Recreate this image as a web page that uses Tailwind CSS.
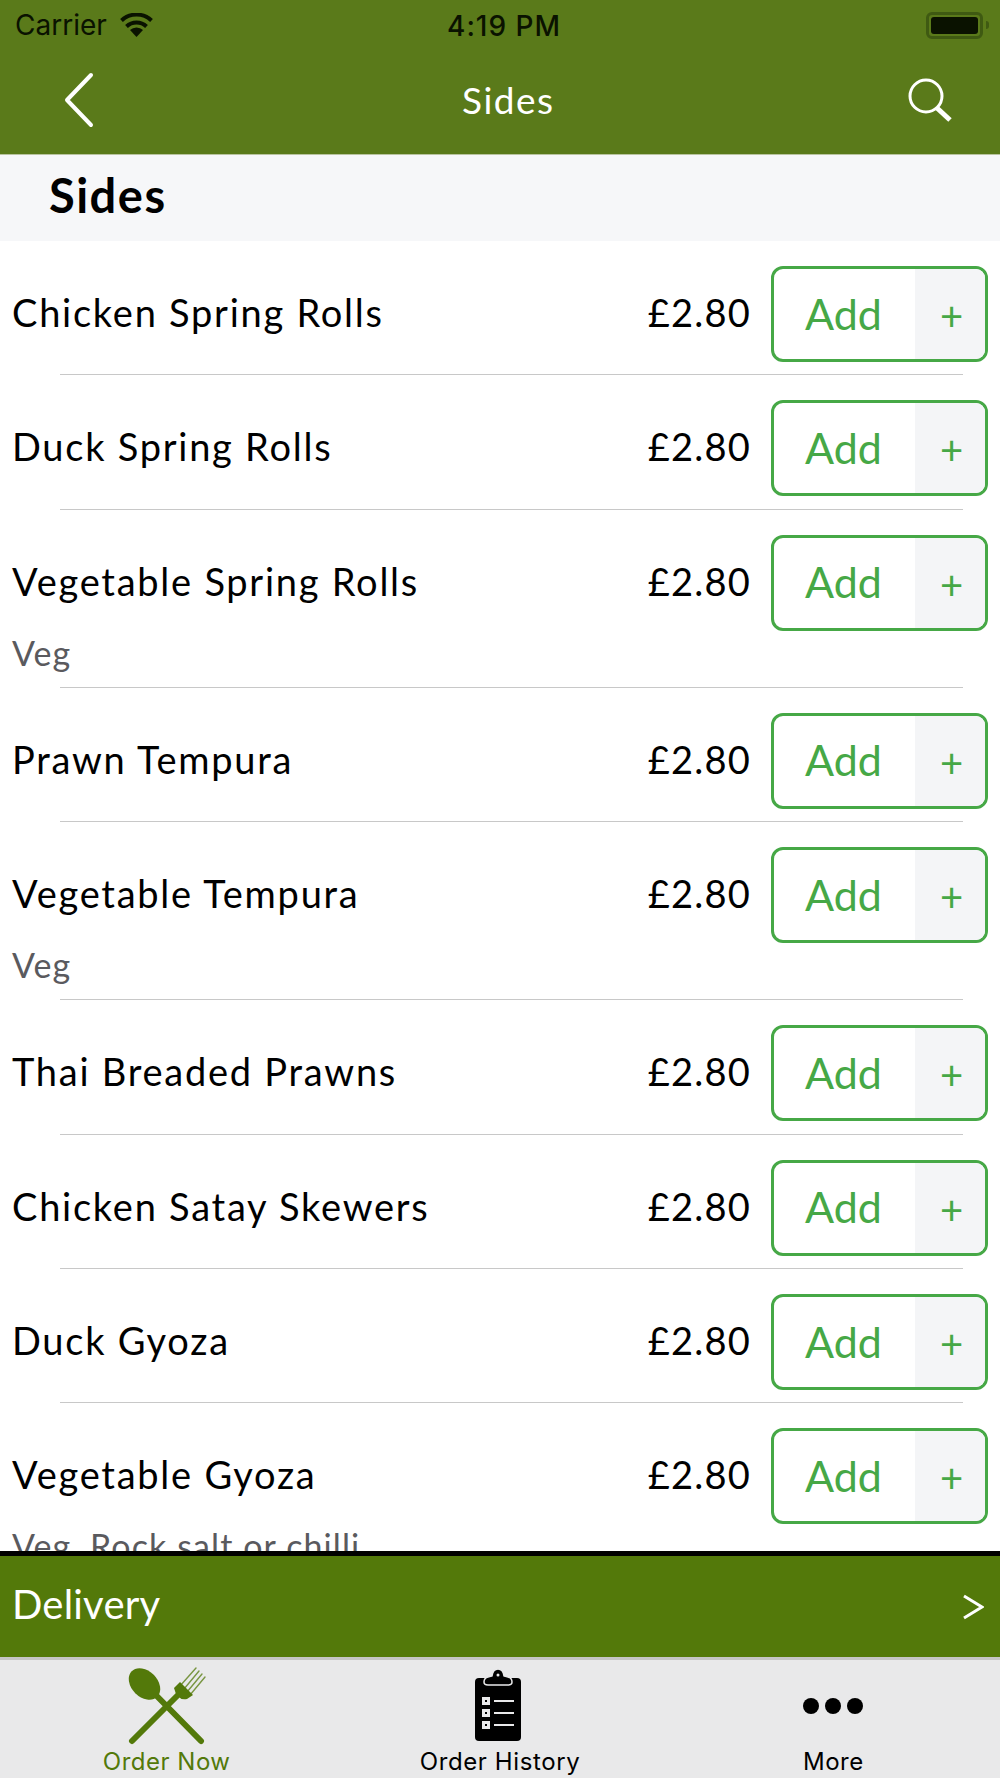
<!DOCTYPE html>
<html lang="en">
<head>
    <meta charset="UTF-8">
    <title>Sides</title>
    <script src="https://cdn.jsdelivr.net/npm/@tailwindcss/browser@4"></script>
</head>
<body class="bg-white font-['Lato',sans-serif] text-black">
<div class="flex flex-col w-[1000px] h-[1778px] overflow-hidden">
    <!-- Header -->
    <header class="h-[155px] shrink-0 bg-[#5a7a1a] flex flex-col border-b border-[#b9c4a0]">
        <div class="h-[50px] flex items-center relative px-[15px] font-['Inter',sans-serif] text-[#0a1200]">
            <span class="text-[28px] leading-none">Carrier</span>
            <svg class="ml-[13px] w-[33px] h-[24px] -mt-[1px]" viewBox="0 0 33 24">
                <path d="M16.5 24 L10 17 A9.5 9.5 0 0 1 23 17 Z" fill="#0a1200"/>
                <path d="M6.5 13.5 A14.5 14.5 0 0 1 26.5 13.5" fill="none" stroke="#0a1200" stroke-width="4"/>
                <path d="M1.5 7.5 A22 22 0 0 1 31.5 7.5" fill="none" stroke="#0a1200" stroke-width="4"/>
            </svg>
            <span class="absolute left-[447px] text-[28px] leading-none font-medium tracking-[1px] mt-[1px]">4:19 PM</span>
            <div class="ml-auto mr-[-4px] flex items-center">
                <div class="w-[57px] h-[27px] rounded-[6px] border-[3px] border-[#3f5a12] p-[2px]">
                    <div class="w-full h-full rounded-[3px] bg-[#0a1200]"></div>
                </div>
                <div class="w-[3px] h-[8px] ml-[3px] bg-[#3f5a12] rounded-r-sm"></div>
            </div>
        </div>
        <div class="flex-1 flex items-center pl-[60px] pr-[47px] relative pb-[5px]">
            <svg class="w-[36px] h-[56px]" viewBox="0 0 36 56">
                <path d="M31 3 L7 28 L31 53" fill="none" stroke="white" stroke-width="4" stroke-linecap="round" stroke-linejoin="round"/>
            </svg>
            <span class="text-[37px] text-white leading-none tracking-[1.5px] ml-[366px]">Sides</span>
            <svg class="w-[46px] h-[48px] ml-auto" viewBox="0 0 46 48">
                <circle cx="19" cy="20" r="16" fill="none" stroke="white" stroke-width="3"/>
                <path d="M30 32 L43 44" stroke="white" stroke-width="5"/>
            </svg>
        </div>
    </header>

    <div class="h-[86px] shrink-0 bg-[#f6f7f9] flex items-center pl-[49px] pb-[6px]">
        <h1 class="text-[47px] font-bold leading-none tracking-[1.5px]">Sides</h1>
    </div>

    <!-- Items -->
    <main id="list" class="flex-1 overflow-hidden"></main>

    <div class="h-[5px] shrink-0 bg-black"></div>
    <div class="h-[101px] shrink-0 bg-[#53790a] flex items-center justify-between pl-[12px] pr-[16px] text-white">
        <span class="text-[40px] leading-none -mt-[6px] tracking-[0.2px]">Delivery</span>
        <svg class="w-[22px] h-[26px]" viewBox="0 0 22 26">
            <path d="M2 2 L20 13 L2 24" fill="none" stroke="white" stroke-width="3"/>
        </svg>
    </div>

    <!-- Tab bar -->
    <nav class="h-[121px] shrink-0 bg-[#e9e9ea] border-t-[3px] border-[#c6c6c6] grid grid-cols-3">
        <div class="flex flex-col items-center">
            <svg class="w-[80px] h-[80px] mt-[5px]" viewBox="0 0 80 80">
                <g fill="none" stroke="#53790a" stroke-linecap="round">
                    <path d="M18 19 L74 76" stroke-width="6"/>
                    <path d="M5 76 L54 27" stroke-width="6"/>
                    <path d="M53 21 L69 3 M57 24 L72 6 M60 27 L75 9 M63 30 L78 12" stroke-width="1.4" stroke-opacity="0.75"/>
                </g>
                <ellipse cx="17.5" cy="19" rx="18" ry="13" transform="rotate(45 17.5 19)" fill="#53790a"/>
                <path d="M47 23 L53 17 L66 30 L60 34 Q50 36 47 23 Z" fill="#53790a"/>
            </svg>
            <span class="text-[24px] leading-none mt-[5px] text-[#53790a] font-['Inter',sans-serif] tracking-[0.5px]">Order Now</span>
        </div>
        <div class="flex flex-col items-center">
            <svg class="w-[46px] h-[72px] mt-[9px] -ml-[4px]" viewBox="0 0 46 72">
                <rect x="0" y="9" width="46" height="63" rx="4" fill="black"/>
                <path d="M9 13 Q9 9 13 8 L17 7 Q18 0 23 0 Q28 0 29 7 L33 8 Q37 9 37 13 Q37 16 33 16 L13 16 Q9 16 9 13 Z" fill="black" stroke="#e9e9ea" stroke-width="1.5"/>
                <circle cx="23" cy="6" r="1.5" fill="#e9e9ea"/>
                <g fill="#e9e9ea">
                    <path fill-rule="evenodd" d="M7 28h8v8H7z M10 31v2h2v-2z"/>
                    <path fill-rule="evenodd" d="M7 40h8v8H7z M10 43v2h2v-2z"/>
                    <path fill-rule="evenodd" d="M7 52h8v8H7z M10 55v2h2v-2z"/>
                    <rect x="19" y="31" width="20" height="2"/>
                    <rect x="19" y="43" width="20" height="2"/>
                    <rect x="19" y="55" width="20" height="2"/>
                </g>
            </svg>
            <span class="text-[24px] leading-none mt-[9px] font-['Inter',sans-serif] tracking-[0.6px]">Order History</span>
        </div>
        <div class="flex flex-col items-center">
            <div class="flex gap-[6px] mt-[38px] mb-[36px]">
                <div class="w-[16px] h-[16px] rounded-full bg-black"></div>
                <div class="w-[16px] h-[16px] rounded-full bg-black"></div>
                <div class="w-[16px] h-[16px] rounded-full bg-black"></div>
            </div>
            <span class="text-[24px] leading-none font-['Inter',sans-serif] tracking-[0.5px]">More</span>
        </div>
    </nav>
</div>

<script>
    const items = [
        { name: 'Chicken Spring Rolls' },
        { name: 'Duck Spring Rolls' },
        { name: 'Vegetable Spring Rolls', note: 'Veg' },
        { name: 'Prawn Tempura' },
        { name: 'Vegetable Tempura', note: 'Veg' },
        { name: 'Thai Breaded Prawns' },
        { name: 'Chicken Satay Skewers' },
        { name: 'Duck Gyoza' },
        { name: 'Vegetable Gyoza', note: 'Veg, Rock salt or chilli' }
    ];

    document.getElementById('list').innerHTML = items.map(item => `
        <div>
            <div class="flex items-center pt-[25px] pl-[12px] pr-[12px]">
                <span class="flex-1 text-[38px] leading-none tracking-[1.75px] -mt-[4px]">${item.name}</span>
                <span class="text-[38px] leading-none tracking-[1.2px] mr-[20px] -mt-[4px]">£2.80</span>
                <div class="w-[217px] h-[96px] rounded-[12px] border-[3px] border-[#46a846] flex overflow-hidden text-[#46a846]">
                    <div class="flex-1 flex items-center justify-center text-[43px] leading-none pr-[2px] pb-[2px]">Add</div>
                    <div class="w-[70px] bg-[#f4f5f7] flex items-center justify-center text-[40px] leading-none pt-[4px] pl-[3px]">+</div>
                </div>
            </div>
            ${item.note ? `<div class="h-[44px] flex items-center pl-[12px] text-[34px] leading-none tracking-[1.1px] text-[#5a5a5e]">${item.note}</div>` : ''}
            <div class="h-[13.3px] flex items-end"><div class="h-px w-[903px] ml-[60px] bg-[#c8c8c8]"></div></div>
        </div>
    `).join('');
</script>
</body>
</html>
